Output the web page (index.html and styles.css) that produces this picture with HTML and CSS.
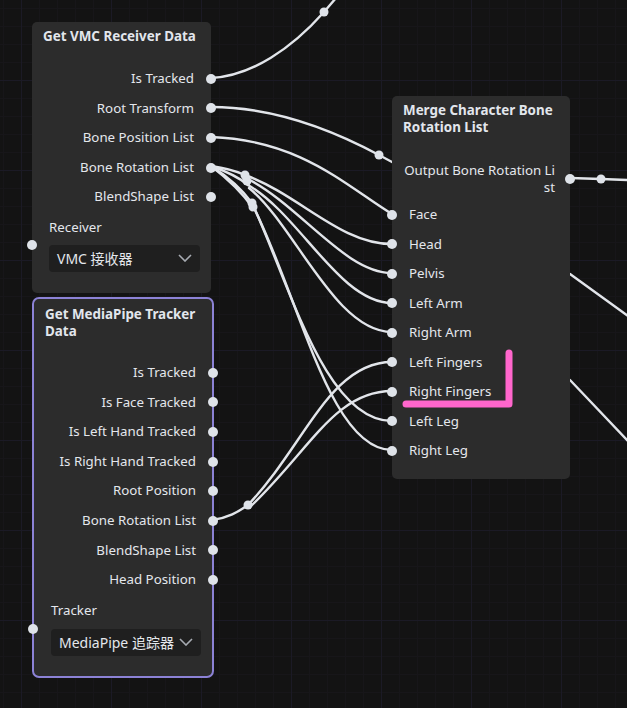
FILE: index.html
```html
<!DOCTYPE html>
<html>
<head>
<meta charset="utf-8">
<link rel="stylesheet" href="styles.css">
</head>
<body>
<div class="canvas">
  <svg class="wires" width="627" height="708" viewBox="0 0 627 708">
    <g fill="none" stroke="#e2e5ea" stroke-width="2.4" stroke-linecap="round">
      <path d="M211,78 C252,76 292,48 324,12 L336,-2"/>
      <path d="M211,107 C280,107 340,134 379,155 L392,162"/>
      <path d="M211,137 C300,140 345,185 392,214"/>
      <path d="M211,166 C225,168 236,171 245,175"/>
      <path d="M211,166 C228,172 240,178 248,185"/>
      <path d="M211,166 C230,178 244,192 252,203"/>
      <path d="M211,166 C232,182 246,198 253,208"/>
      <path d="M245,175 C300,195 340,244 392,244"/>
      <path d="M246,178 C300,205 345,273 392,273"/>
      <path d="M248,185 C300,215 340,303 392,303"/>
      <path d="M249,188 C295,225 335,332 392,332"/>
      <path d="M252,203 C290,285 325,421 392,421"/>
      <path d="M254,208 C300,300 330,450 392,450"/>
      <path d="M212,520 C228,518 238,512 248,505"/>
      <path d="M248,505 C305,445 330,362 392,362"/>
      <path d="M250,507 C310,450 335,391 392,391"/>
      <path d="M570,178 L601,179 L628,180"/>
      <path d="M570,274 L628,316"/>
      <path d="M570,380 L628,441"/>
    </g>
    <g fill="#dfe3e9">
      <circle cx="324" cy="12" r="4.5"/>
      <circle cx="379" cy="155" r="4.5"/>
      <circle cx="245" cy="175" r="4.5"/>
      <circle cx="247" cy="181" r="4.5"/>
      <circle cx="252" cy="203" r="4.5"/>
      <circle cx="253" cy="207" r="4.5"/>
      <circle cx="248" cy="505" r="4.5"/>
      <circle cx="601" cy="179" r="4.5"/>
    </g>
  </svg>

  <div class="node node-vmc">
    <div class="title">Get VMC Receiver Data</div>
    <div class="outputs">
      <div class="out">Is Tracked<span class="port port-r"></span></div>
      <div class="out">Root Transform<span class="port port-r"></span></div>
      <div class="out">Bone Position List<span class="port port-r"></span></div>
      <div class="out">Bone Rotation List<span class="port port-r"></span></div>
      <div class="out">BlendShape List<span class="port port-r"></span></div>
    </div>
    <div class="field">
      <div class="field-label">Receiver</div>
      <div class="select">
        <span class="port port-in"></span>
        <span class="select-text">VMC 接收器</span>
        <svg class="chev" width="14" height="8" viewBox="0 0 14 8"><path d="M1,1 L7,7 L13,1" fill="none" stroke="#a7abb2" stroke-width="1.6"/></svg>
      </div>
    </div>
  </div>

  <div class="node node-mp">
    <div class="title">Get MediaPipe Tracker Data</div>
    <div class="outputs">
      <div class="out">Is Tracked<span class="port port-r"></span></div>
      <div class="out">Is Face Tracked<span class="port port-r"></span></div>
      <div class="out">Is Left Hand Tracked<span class="port port-r"></span></div>
      <div class="out">Is Right Hand Tracked<span class="port port-r"></span></div>
      <div class="out">Root Position<span class="port port-r"></span></div>
      <div class="out">Bone Rotation List<span class="port port-r"></span></div>
      <div class="out">BlendShape List<span class="port port-r"></span></div>
      <div class="out">Head Position<span class="port port-r"></span></div>
    </div>
    <div class="field">
      <div class="field-label">Tracker</div>
      <div class="select">
        <span class="port port-in"></span>
        <span class="select-text">MediaPipe 追踪器</span>
        <svg class="chev" width="14" height="8" viewBox="0 0 14 8"><path d="M1,1 L7,7 L13,1" fill="none" stroke="#a7abb2" stroke-width="1.6"/></svg>
      </div>
    </div>
  </div>

  <div class="node node-merge">
    <div class="title">Merge Character Bone Rotation List</div>
    <div class="out out-wrap">Output Bone Rotation List<span class="port port-r"></span></div>
    <div class="inputs">
      <div class="in"><span class="port port-l"></span>Face</div>
      <div class="in"><span class="port port-l"></span>Head</div>
      <div class="in"><span class="port port-l"></span>Pelvis</div>
      <div class="in"><span class="port port-l"></span>Left Arm</div>
      <div class="in"><span class="port port-l"></span>Right Arm</div>
      <div class="in"><span class="port port-l"></span>Left Fingers</div>
      <div class="in"><span class="port port-l"></span>Right Fingers</div>
      <div class="in"><span class="port port-l"></span>Left Leg</div>
      <div class="in"><span class="port port-l"></span>Right Leg</div>
    </div>
  </div>

  <svg class="mark" width="627" height="708" viewBox="0 0 627 708">
    <path d="M509,353 L509,404 L406,404" fill="none" stroke="#ff66cc" stroke-width="7" stroke-linecap="round" stroke-linejoin="round"/>
  </svg>
</div>
</body>
</html>
```

FILE: styles.css
```css
html, body {
  margin: 0;
  padding: 0;
  background: #131313;
}
.canvas {
  position: relative;
  width: 627px;
  height: 708px;
  overflow: hidden;
  font-family: "Noto Sans", "Noto Sans CJK SC", sans-serif;
  font-size: 13.3px;
  color: #e4e7ec;
  background-color: #131313;
  background-image:
    linear-gradient(to right, #1b1a25 1px, transparent 1px),
    linear-gradient(to bottom, #1b1a25 1px, transparent 1px),
    linear-gradient(to right, #171619 1px, transparent 1px),
    linear-gradient(to bottom, #171619 1px, transparent 1px);
  background-size: 90px 90px, 90px 90px, 18px 18px, 18px 18px;
  background-position: 21px 80px, 21px 80px, 3px 8px, 3px 8px;
}
.wires, .mark {
  position: absolute;
  left: 0;
  top: 0;
}
.mark { z-index: 5; }
.node {
  position: absolute;
  box-sizing: border-box;
  background: #2c2c2c;
  border-radius: 5px;
  display: flex;
  flex-direction: column;
}
.title {
  font-weight: 700;
  font-size: 13.4px;
  line-height: 16.5px;
  color: #e2e6ec;
}
.outputs, .inputs {
  display: flex;
  flex-direction: column;
}
.out {
  position: relative;
  height: 29.6px;
  line-height: 29.6px;
  text-align: right;
  white-space: nowrap;
}
.in {
  position: relative;
  height: 29.5px;
  line-height: 29.5px;
  padding-left: 17px;
  white-space: nowrap;
}
.port {
  position: absolute;
  width: 10px;
  height: 10px;
  border-radius: 50%;
  background: #dfe3e9;
  top: 50%;
  margin-top: -5px;
}
.field {
  display: flex;
  flex-direction: column;
}
.field-label {
  line-height: 17px;
}
.select {
  position: relative;
  display: flex;
  align-items: center;
  justify-content: space-between;
  gap: 4px;
  height: 27px;
  box-sizing: border-box;
  padding: 0 8px 0 8px;
  background: #1f1f1f;
  border-radius: 4px;
  font-size: 14px;
  white-space: nowrap;
}
.select .port-in {
  top: 0;
}
.chev { flex: none; }

/* VMC node */
.node-vmc {
  left: 32px;
  top: 22px;
  width: 179px;
  height: 271px;
  padding-top: 6px;
}
.node-vmc .title { padding-left: 11px; line-height: 17px; }
.node-vmc .outputs { margin-top: 19px; }
.node-vmc .out { padding-right: 17px; }
.node-vmc .port-r { right: -5px; }
.node-vmc .field { margin: 7px 11px 0 17px; gap: 9px; }
.node-vmc .port-in { left: -22px; }

/* MediaPipe node */
.node-mp {
  left: 32px;
  top: 297px;
  width: 182px;
  height: 381px;
  border: 2px solid #8c82d6;
  border-radius: 7px;
  padding-top: 7px;
}
.node-mp .title { padding: 0 4px 0 11px; }
.node-mp .outputs { margin-top: 19px; }
.node-mp .out { padding-right: 16px; }
.node-mp .port-r { right: -6px; }
.node-mp .field { margin: 7px 11px 0 17px; gap: 10px; }
.node-mp .port-in { left: -23px; }

/* Merge node */
.node-merge {
  left: 392px;
  top: 96px;
  width: 178px;
  height: 383px;
  padding-top: 6px;
}
.node-merge .title { padding: 0 12px 0 11px; }
.node-merge .out-wrap {
  height: auto;
  line-height: 16.5px;
  margin: 27px 15px 0 9px;
  white-space: normal;
  word-break: break-all;
}
.node-merge .out-wrap .port-r { right: -20px; }
.node-merge .inputs { margin-top: 5px; }
.node-merge .port-l { left: -5px; }
```
